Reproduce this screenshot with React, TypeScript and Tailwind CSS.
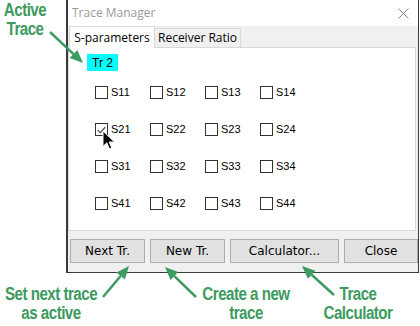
import { useState } from 'react'

const ui = { fontFamily: '"Liberation Sans", Arial, sans-serif' }
const btnFont = { fontFamily: '"DejaVu Sans", Tahoma, sans-serif' }
const note = { fontFamily: '"Liberation Sans", Arial, sans-serif' }

const rows = [1, 2, 3, 4]
const cols = [1, 2, 3, 4]

const Checkbox = ({ label, checked }: { label: string; checked: boolean }) => (
    <div className="flex items-center gap-[3px] w-[55px]">
        <span className="w-[13px] h-[13px] border border-[#333] bg-white flex items-center justify-center">
            {checked && (
                <svg width="9" height="8" viewBox="0 0 9 8">
                    <path d="M0.8 4.2 L3.3 6.6 L8.2 1.2" fill="none" stroke="#555" strokeWidth="1.3" />
                </svg>
            )}
        </span>
        <span className="text-[11px] leading-none text-black" style={ui}>{label}</span>
    </div>
)

const Button = ({ label, w }: { label: string; w: string }) => (
    <button className={`${w} h-[24px] bg-[#e1e1e1] border border-[#adadad] text-[12px] text-black flex items-center justify-center`} style={btnFont}>
        {label}
    </button>
)

const Arrow = ({ x1, y1, x2, y2 }: { x1: number; y1: number; x2: number; y2: number }) => {
    const a = Math.atan2(y2 - y1, x2 - x1)
    const len = 13
    const hw = 5.5
    const bx = x2 - len * Math.cos(a)
    const by = y2 - len * Math.sin(a)
    const px = -Math.sin(a) * hw
    const py = Math.cos(a) * hw
    return (
        <g>
            <line x1={x1} y1={y1} x2={bx} y2={by} stroke="#3d9a60" strokeWidth="2.5" />
            <polygon points={`${x2},${y2} ${bx + px},${by + py} ${bx - px},${by - py}`} fill="#3d9a60" />
        </g>
    )
}

const Note = ({ pos, lines }: { pos: string; lines: string[] }) => (
    <div className={`absolute ${pos} w-[120px] flex flex-col items-center text-[18px] leading-[19px] font-bold text-[#3d9a60] tracking-[-0.6px] whitespace-nowrap scale-x-[0.84]`} style={note}>
        {lines.map((l) => (
            <span key={l}>{l}</span>
        ))}
    </div>
)

export default function App() {
    const [checked] = useState('S21')

    return (
        <div className="relative w-[420px] h-[326px] bg-white overflow-hidden">
            {/* dialog */}
            <div className="ml-[66px] w-[353px] h-[273px] bg-[#f0f0f0] border-l-2 border-r border-b border-[#3a3a3a] flex flex-col">
                <div className="h-[26px] bg-white flex items-center justify-between pl-[4px] pr-[9px]">
                    <span className="text-[12px] text-[#9a9a9a]" style={{ fontFamily: '"Open Sans", sans-serif' }}>Trace Manager</span>
                    <svg width="11" height="11" viewBox="0 0 11 11">
                        <path d="M0.5 0.5 L10.5 10.5 M10.5 0.5 L0.5 10.5" stroke="#8a8a8a" strokeWidth="1" />
                    </svg>
                </div>

                {/* tabs */}
                <div className="h-[21px] flex items-end pl-[1px]" style={{ fontFamily: '"Open Sans", sans-serif' }}>
                    <div className="relative z-10 h-[22px] w-[86px] -mb-px bg-white border border-b-0 border-[#d9d9d9] flex items-center justify-center text-[12px] text-black">
                        S-parameters
                    </div>
                    <div className="h-[19px] w-[86px] border border-l-0 border-b-0 border-[#d9d9d9] flex items-center justify-center text-[12px] text-black">
                        Receiver Ratio
                    </div>
                </div>

                <div className="mr-[2px] h-[184px] bg-white border border-[#d9d9d9] flex flex-col">
                    <div className="mt-[6px] ml-[18px] w-[31px] h-[17px] bg-[#00ffff] flex items-center justify-center text-[12px] text-black" style={ui}>
                        Tr 2
                    </div>
                    <div className="mt-[15px] ml-[26px] flex flex-col gap-[24px]">
                        {rows.map((r) => (
                            <div key={r} className="flex h-[13px]">
                                {cols.map((c) => (
                                    <Checkbox key={c} label={`S${r}${c}`} checked={checked === `S${r}${c}`} />
                                ))}
                            </div>
                        ))}
                    </div>
                </div>

                <div className="mt-[8px] ml-[2px] flex gap-[5px]">
                    <Button label="Next Tr." w="w-[75px]" />
                    <Button label="New Tr." w="w-[75px]" />
                    <Button label="Calculator..." w="w-[109px]" />
                    <Button label="Close" w="w-[74px]" />
                </div>
            </div>

            {/* mouse pointer */}
            <svg className="absolute left-[102px] top-[130px]" width="14" height="22" viewBox="0 0 14 22">
                <path d="M1 1 L1 16.5 L4.8 12.8 L7.5 19 L9.8 18 L7.2 12 L12.5 12 Z" fill="#000" stroke="#fff" strokeWidth="1" />
            </svg>

            {/* callouts */}
            <svg className="absolute inset-0 pointer-events-none" width="420" height="326">
                <Arrow x1={50} y1={32} x2={83} y2={63} />
                <Arrow x1={103} y1={297} x2={129} y2={266} />
                <Arrow x1={196} y1={297} x2={165} y2={267} />
                <Arrow x1={334} y1={295} x2={302} y2={266} />
            </svg>

            <Note pos="left-[-35px] top-[1px]" lines={['Active', 'Trace']} />
            <Note pos="left-[-9px] top-[285px]" lines={['Set next trace', 'as active']} />
            <Note pos="left-[186px] top-[285px]" lines={['Create a new', 'trace']} />
            <Note pos="left-[298px] top-[285px]" lines={['Trace', 'Calculator']} />
        </div>
    )
}
